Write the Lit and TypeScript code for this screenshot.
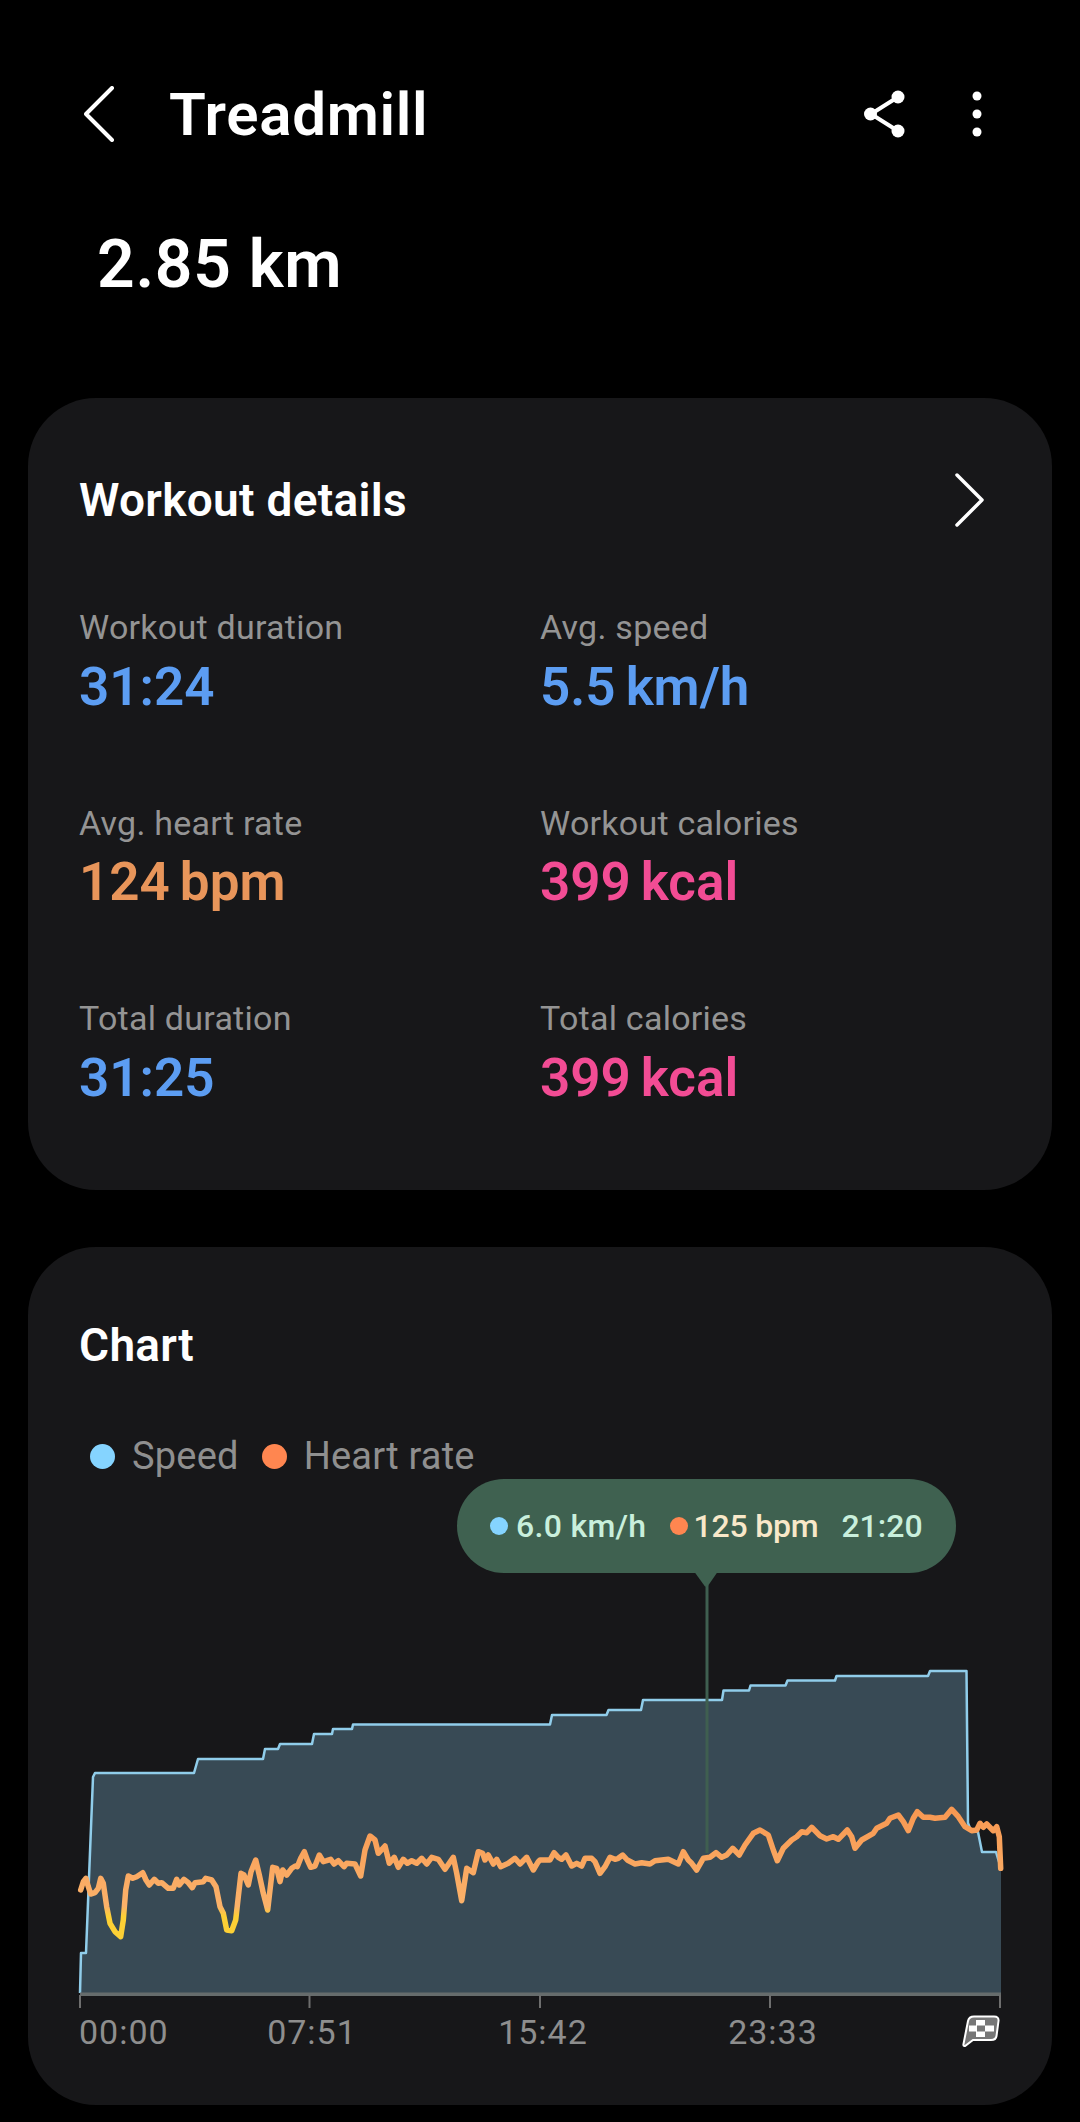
import { LitElement, html, css, svg } from "lit";
import { customElement } from "lit/decorators.js";

const BASE_Y = 1993;

// speed steps, page coordinates
const SPEED: number[][] = [
  [80, 1993], [81, 1953], [86, 1953], [93, 1777], [95, 1773], [194, 1773], [198, 1759],
  [263, 1759], [265, 1749], [278, 1749], [280, 1744], [312, 1744], [314, 1734], [332, 1734],
  [333, 1729], [352, 1729], [353, 1724.5], [550, 1724.5], [552, 1715], [606.5, 1715],
  [608.5, 1710], [641, 1710], [643, 1700], [722, 1700], [723.5, 1690.5], [749, 1690.5],
  [750.5, 1685.5], [785.5, 1685.5], [787.5, 1680.5], [835, 1680.5], [836.5, 1676], [928, 1676],
  [930, 1671], [966.5, 1671], [968, 1823], [971, 1831], [978, 1832], [982, 1852], [996, 1852],
  [997.5, 1857], [1001, 1868],
];

// heart rate traced from two crops, each at 3x
const HR_LEFT = [
  62,450, 70,425, 78,415, 85,440, 92,462, 105,458, 115,445, 122,415, 130,430, 140,500, 150,550,
  165,575, 182,590, 190,540, 197,450, 205,408, 218,415, 230,410, 248,398, 258,420, 268,435,
  283,418, 295,430, 305,428, 325,445, 340,445, 350,418, 358,435, 372,418, 385,428, 397,443,
  405,428, 430,425, 437,415, 455,420, 468,440, 480,500, 490,520, 500,570, 515,572, 527,540,
  535,470, 543,400, 552,405, 565,435, 573,395, 587,360, 598,405, 610,460, 623,510, 630,450,
  638,382, 650,385, 660,425, 668,390, 680,405, 695,385, 706,378, 712,380, 722,355, 733,335,
  742,360, 752,382, 765,378, 778,345, 790,365, 800,362, 812,358, 822,372, 835,362, 852,380,
  860,370, 885,372, 902,408, 915,330, 930,288, 945,300, 955,340, 975,318, 988,370, 1003,352,
  1015,382, 1030,358, 1042,370, 1055,362, 1070,370, 1085,355, 1100,372, 1115,352, 1135,358,
  1155,388, 1180,352, 1190,400, 1205,482, 1220,385, 1240,398, 1255,335, 1268,340, 1275,360,
  1285,345, 1300,372, 1310,358, 1322,380, 1345,370, 1365,355, 1380,372, 1400,352, 1420,390,
  1435,365,
];
const HR_RIGHT = [
  0,360, 30,360, 42,338, 55,352, 65,358, 78,345, 95,378, 110,370, 125,378, 135,355, 155,355,
  165,365, 180,400, 195,380, 210,352, 225,358, 235,355, 248,345, 262,360, 285,372, 305,368,
  330,372, 345,362, 385,358, 415,372, 430,335, 445,360, 455,370, 470,390, 490,355, 510,352,
  528,338, 545,352, 560,345, 578,325, 598,345, 615,315, 640,280, 660,270, 685,285, 700,330,
  712,362, 730,325, 755,300, 770,290, 785,275, 800,278, 815,262, 840,287, 860,297, 880,290,
  895,298, 922,270, 935,290, 945,325, 965,300, 1000,280, 1010,265, 1040,250, 1050,235,
  1075,225, 1090,245, 1105,272, 1120,235, 1132,215, 1150,232, 1170,232, 1185,235, 1215,232,
  1235,208, 1255,230, 1275,260, 1295,272, 1310,270, 1320,250, 1330,262, 1340,252, 1360,272,
  1370,260, 1378,290, 1382,385,
];

function toPoints(flat: number[], ox: number, oy: number) {
  const out: string[] = [];
  for (let i = 0; i < flat.length; i += 2) {
    out.push(`${(ox + flat[i] / 3).toFixed(1)},${(oy + flat[i + 1] / 3).toFixed(1)}`);
  }
  return out;
}

const HR_POINTS = [...toPoints(HR_LEFT, 60, 1740), ...toPoints(HR_RIGHT, 540, 1740)].join(" ");
const SPEED_POINTS = SPEED.map((p) => p.join(",")).join(" ");
const AREA_POINTS = `${SPEED_POINTS} 1001,${BASE_Y}`;

const TICKS = [80, 309.5, 540, 770, 1000];
const TICK_LABELS = [
  { x: 79, label: "00:00", anchor: "start" },
  { x: 312, label: "07:51", anchor: "middle" },
  { x: 543, label: "15:42", anchor: "middle" },
  { x: 773, label: "23:33", anchor: "middle" },
];

const STATS = [
  { label: "Workout duration", value: "31:24", unit: "", tone: "blue" },
  { label: "Avg. speed", value: "5.5", unit: "km/h", tone: "blue" },
  { label: "Avg. heart rate", value: "124", unit: "bpm", tone: "orange" },
  { label: "Workout calories", value: "399", unit: "kcal", tone: "pink" },
  { label: "Total duration", value: "31:25", unit: "", tone: "blue" },
  { label: "Total calories", value: "399", unit: "kcal", tone: "pink" },
];

@customElement("app-root")
export class AppRoot extends LitElement {
  static styles = css`
    :host {
      display: block;
      width: 1080px;
      height: 2122px;
      background: #000;
      color: #fff;
      font-family: Roboto, "Liberation Sans", sans-serif;
      overflow: hidden;
    }
    .header {
      display: flex;
      align-items: center;
      height: 100px;
      margin-top: 64px;
      padding: 0 92px 0 84px;
    }
    .header svg {
      display: block;
    }
    .title {
      margin: 2px 0 0 53px;
      font-size: 60px;
      font-weight: 600;
      letter-spacing: 0.7px;
      line-height: 70px;
    }
    .actions {
      display: flex;
      align-items: center;
      gap: 56px;
      margin-left: auto;
    }
    .distance {
      margin: 63px 0 95px 97px;
      font-size: 66px;
      font-weight: 600;
      letter-spacing: 0.7px;
      line-height: 76px;
    }
    .card {
      margin: 0 28px;
      padding: 0 52px 0 51px;
      background: #171719;
      border-radius: 68px;
    }
    .details {
      height: 740px;
      padding-top: 52px;
      margin-bottom: 57px;
    }
    .card-head {
      display: flex;
      align-items: center;
      justify-content: space-between;
      height: 100px;
      padding-right: 16px;
      font-size: 46px;
      font-weight: 600;
      letter-spacing: 0.3px;
    }
    .stats {
      display: grid;
      grid-template-columns: 461px 1fr;
      row-gap: 86px;
      margin-top: 57px;
    }
    .stat-label {
      color: #949494;
      font-size: 34px;
      letter-spacing: 0.25px;
      line-height: 40px;
    }
    .stat-value {
      display: flex;
      gap: 10px;
      margin-top: 9.5px;
      font-size: 53px;
      font-weight: 600;
      line-height: 60px;
    }
    .blue { color: #5c9df2; }
    .orange { color: #e8955a; }
    .pink { color: #f24c94; }
    .trend {
      padding-top: 48px;
      padding-bottom: 31px;
    }
    .legend {
      display: flex;
      align-items: center;
      height: 36px;
      margin-top: 43px;
      padding-left: 11px;
      color: #8f8f8f;
      font-size: 38px;
      letter-spacing: 0.2px;
    }
    .legend-dot {
      width: 25px;
      height: 25px;
      border-radius: 50%;
      margin-right: 17px;
    }
    .legend-name {
      margin-right: 23px;
    }
    .sky { background: #85d4ff; }
    .coral { background: #ff8650; }
    .chart {
      position: relative;
      margin: 0 -52px 0 -51px;
    }
    .chart svg {
      display: block;
    }
    .tick-label {
      fill: #8e8e8e;
      font-size: 34px;
      letter-spacing: 1px;
    }
    .tip {
      position: absolute;
      left: 429px;
      top: 5px;
      display: flex;
      align-items: center;
      box-sizing: border-box;
      width: 499px;
      height: 94px;
      padding-left: 33px;
      background: #3f6150;
      border-radius: 47px;
      color: #c9efdc;
      font-size: 32px;
      font-weight: 500;
    }
    .tip-dot {
      width: 18px;
      height: 18px;
      border-radius: 50%;
      margin-right: 8px;
    }
    .tip-dot.coral {
      margin-right: 5px;
    }
    .tip-speed {
      margin-right: 24px;
      letter-spacing: 0.3px;
    }
    .tip-hr {
      margin-right: 23px;
      color: #f8e8c9;
      letter-spacing: -0.2px;
    }
  `;

  private backIcon() {
    return html`<svg width="32" height="56" viewBox="0 0 32 56" fill="none" stroke="#fff" stroke-width="4" stroke-linecap="round" stroke-linejoin="round">
      <path d="M28 2 2 28l26 26"></path>
    </svg>`;
  }

  private shareIcon() {
    return html`<svg width="50" height="50" viewBox="0 0 50 50" fill="#fff" stroke="#fff">
      <path d="M38 8 11 25l27 17" fill="none" stroke-width="4"></path>
      <circle cx="38" cy="8" r="6.5" stroke="none"></circle>
      <circle cx="10.5" cy="25" r="6.5" stroke="none"></circle>
      <circle cx="38" cy="42" r="6.5" stroke="none"></circle>
    </svg>`;
  }

  private moreIcon() {
    return html`<svg width="22" height="50" viewBox="0 0 22 50" fill="#fff">
      <circle cx="11" cy="7" r="4.5"></circle>
      <circle cx="11" cy="25" r="4.5"></circle>
      <circle cx="11" cy="43" r="4.5"></circle>
    </svg>`;
  }

  private chevronIcon() {
    return html`<svg width="30" height="56" viewBox="0 0 30 56" fill="none" stroke="#fff" stroke-width="3.5" stroke-linecap="round" stroke-linejoin="round">
      <path d="M3 3l25 25L3 53"></path>
    </svg>`;
  }

  private chart() {
    return html`<svg width="1024" height="600" viewBox="28 1474 1024 600">
      <defs>
        <linearGradient id="hr" gradientUnits="userSpaceOnUse" x1="0" y1="1800" x2="0" y2="1940">
          <stop offset="0" stop-color="#f7954f"></stop>
          <stop offset="0.5" stop-color="#faa962"></stop>
          <stop offset="0.76" stop-color="#fbb26a"></stop>
          <stop offset="0.83" stop-color="#fdd035"></stop>
          <stop offset="1" stop-color="#fdd035"></stop>
        </linearGradient>
      </defs>
      <polygon points=${AREA_POINTS} fill="#384a55"></polygon>
      <polyline points=${SPEED_POINTS} fill="none" stroke="#90cdea" stroke-width="2.5" stroke-linejoin="round"></polyline>
      <path d="M694.5 1572h23L707.5 1586.5h-2.500z" fill="#3f6150"></path>
      <rect x="705.5" y="1585" width="3" height="268" fill="#3f5f50"></rect>
      <polyline points=${HR_POINTS} fill="none" stroke="url(#hr)" stroke-width="5.5" stroke-linejoin="round" stroke-linecap="round"></polyline>
      <rect x="80" y="1992.5" width="921" height="3.5" fill="#666c6c"></rect>
      ${TICKS.map((x) => svg`<rect x=${x - 1} y="1995" width="2" height="13" fill="#6e6e6e"></rect>`)}
      ${TICK_LABELS.map((t) => svg`<text class="tick-label" x=${t.x} y="2044" text-anchor=${t.anchor}>${t.label}</text>`)}
      <path d="M974 2016.500h20q5 0 4.500 4.500l-2 15q-.5 4-5.500 4h-18l-8 6q-2 .5-1.500-2l4.500-23q1-4.500 6-4.500z" fill="#777" stroke="#fff" stroke-width="2"></path>
      <path d="M976 2020h9v5.500h-9zM969 2025.500h8v6h-8zM985 2025.500h9v6h-9zM976 2031.500h9v5.500h-9z" fill="#fff"></path>
    </svg>`;
  }

  render() {
    return html`
      <div class="header">
        ${this.backIcon()}
        <div class="title">Treadmill</div>
        <div class="actions">${this.shareIcon()}${this.moreIcon()}</div>
      </div>
      <div class="distance">2.85 km</div>
      <section class="card details">
        <div class="card-head">Workout details ${this.chevronIcon()}</div>
        <div class="stats">
          ${STATS.map((s) => html`
            <div>
              <div class="stat-label">${s.label}</div>
              <div class="stat-value ${s.tone}"><span>${s.value}</span>${s.unit ? html`<span>${s.unit}</span>` : ""}</div>
            </div>
          `)}
        </div>
      </section>
      <section class="card trend">
        <div class="card-head">Chart</div>
        <div class="legend">
          <span class="legend-dot sky"></span><span class="legend-name">Speed</span>
          <span class="legend-dot coral"></span><span class="legend-name">Heart rate</span>
        </div>
        <div class="chart">
          ${this.chart()}
          <div class="tip">
            <span class="tip-dot sky"></span><span class="tip-speed">6.0 km/h</span>
            <span class="tip-dot coral"></span><span class="tip-hr">125 bpm</span>
            <span>21:20</span>
          </div>
        </div>
      </section>
    `;
  }
}
